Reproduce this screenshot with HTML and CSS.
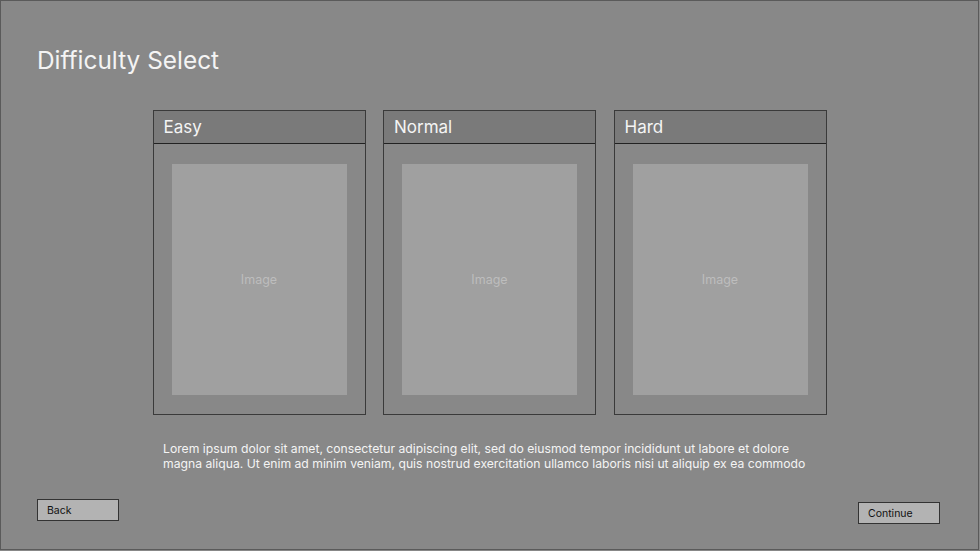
FILE: index.html
```html
<!DOCTYPE html>
<html lang="en">
<head>
    <meta charset="UTF-8">
    <meta name="viewport" content="width=device-width, initial-scale=1.0">
    <title>Difficulty Select</title>
    <link rel="stylesheet" href="styles.css">
</head>
<body>
    <div class="screen">
        <h1 class="title">Difficulty Select</h1>

        <div class="cards">
            <div class="card">
                <div class="card-header">Easy</div>
                <div class="card-body">
                    <div class="card-image">Image</div>
                </div>
            </div>
            <div class="card">
                <div class="card-header">Normal</div>
                <div class="card-body">
                    <div class="card-image">Image</div>
                </div>
            </div>
            <div class="card">
                <div class="card-header">Hard</div>
                <div class="card-body">
                    <div class="card-image">Image</div>
                </div>
            </div>
        </div>

        <p class="description">
            Lorem ipsum dolor sit amet, consectetur adipiscing elit, sed do eiusmod tempor incididunt ut labore et dolore<br>
            magna aliqua. Ut enim ad minim veniam, quis nostrud exercitation ullamco laboris nisi ut aliquip ex ea commodo
        </p>

        <div class="actions">
            <button class="btn">Back</button>
            <button class="btn btn-continue">Continue</button>
        </div>
    </div>
</body>
</html>
```

FILE: styles.css
```css
* {
    margin: 0;
    padding: 0;
    box-sizing: border-box;
}
body {
    font-family: Inter, "Noto Sans", sans-serif;
    background: #888888;
    width: 980px;
    height: 551px;
    overflow: hidden;
}
.screen {
    width: 979px;
    height: 550px;
    background: #888888;
    border: 1px solid #5a5a5a;
    padding: 0 36px;
    display: flex;
    flex-direction: column;
}
.title {
    font-size: 24.4px;
    font-weight: 400;
    color: #f4f4f4;
    line-height: 32px;
    margin-top: 43px;
    margin-bottom: 34px;
}
.cards {
    display: flex;
    justify-content: center;
    gap: 17.5px;
}
.card {
    width: 213px;
    height: 305px;
    border: 1px solid #3a3a3a;
    background: #888888;
    display: flex;
    flex-direction: column;
}
.card-header {
    height: 33px;
    background: #7a7a7a;
    border-bottom: 1px solid #222222;
    color: #f4f4f4;
    font-size: 17px;
    line-height: 33px;
    padding-left: 10px;
}
.card-body {
    flex: 1;
    padding: 20px 18px 19px;
}
.card-image {
    height: 100%;
    background: #a0a0a0;
    color: #bdbdbd;
    font-size: 12.5px;
    display: flex;
    align-items: center;
    justify-content: center;
}
.description {
    margin: 26px 0 0 126px;
    font-size: 12.2px;
    line-height: 15px;
    color: #f4f4f4;
}
.actions {
    display: flex;
    justify-content: space-between;
    align-items: flex-start;
    margin-top: 28px;
    padding-right: 2px;
}
.btn {
    width: 82px;
    height: 22px;
    background: #b3b3b3;
    border: 1px solid #333333;
    font-family: inherit;
    font-size: 10.5px;
    color: #111111;
    text-align: left;
    padding-left: 9px;
    cursor: pointer;
}
.btn-continue {
    margin-top: 3px;
}
```
